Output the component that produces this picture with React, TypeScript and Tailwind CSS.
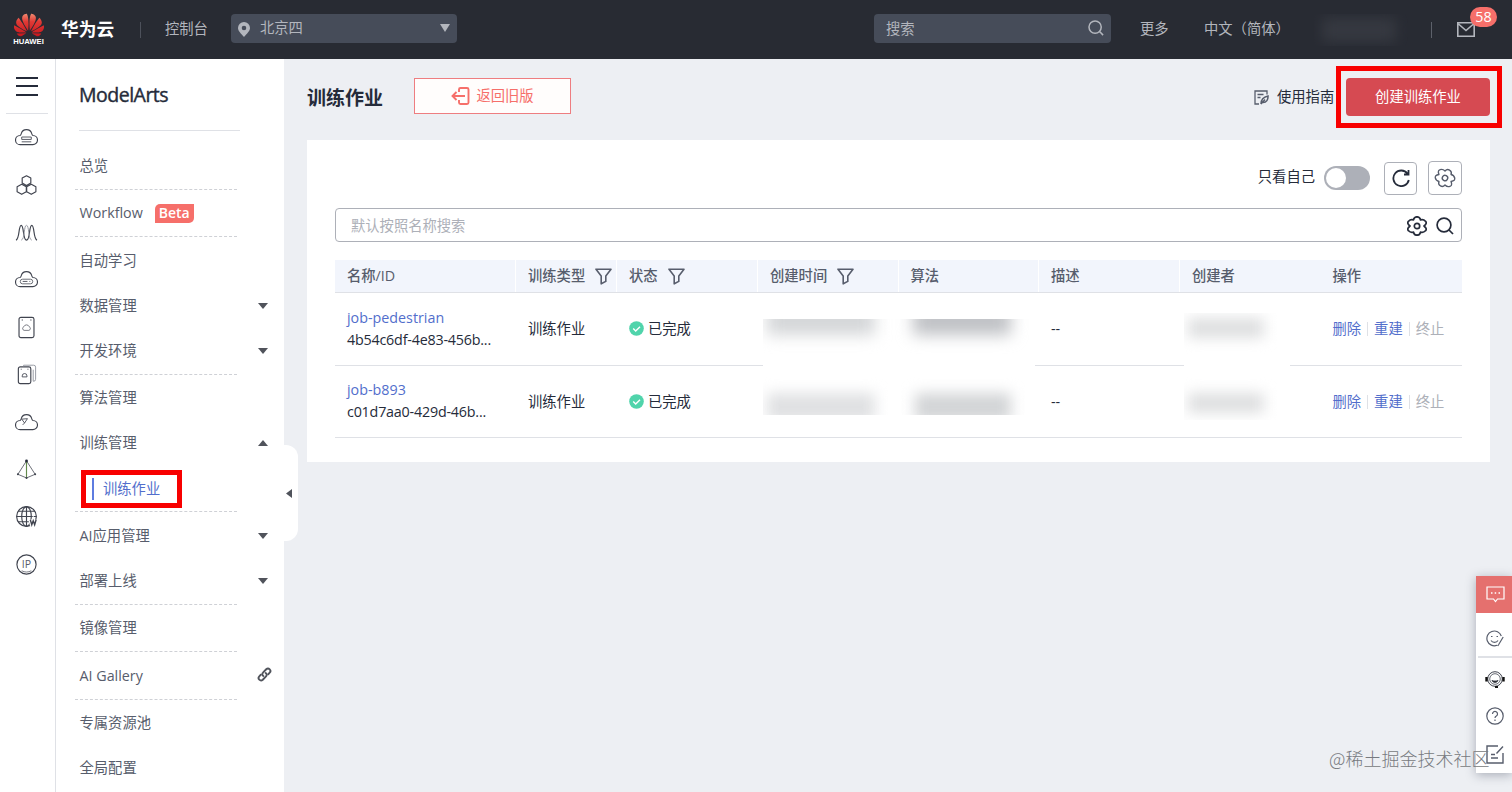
import type { ReactNode } from "react";
import { SiHuawei } from "react-icons/si";

interface IconProps {
  className?: string;
}

interface MenuItem {
  label: string;
  arrow?: "up" | "down";
  beta?: boolean;
  link?: boolean;
  active?: boolean;
}

const menu: MenuItem[][] = [
  [{ label: "总览" }],
  [{ label: "Workflow", beta: true }],
  [
    { label: "自动学习" },
    { label: "数据管理", arrow: "down" },
    { label: "开发环境", arrow: "down" },
  ],
  [
    { label: "算法管理" },
    { label: "训练管理", arrow: "up" },
    { label: "训练作业", active: true },
  ],
  [
    { label: "AI应用管理", arrow: "down" },
    { label: "部署上线", arrow: "down" },
  ],
  [{ label: "镜像管理" }],
  [{ label: "AI Gallery", link: true }],
  [{ label: "专属资源池" }, { label: "全局配置" }],
];

const columns = [
  { label: "名称/ID" },
  { label: "训练类型", filter: true },
  { label: "状态", filter: true },
  { label: "创建时间", filter: true },
  { label: "算法" },
  { label: "描述" },
  { label: "创建者" },
  { label: "操作" },
];

const jobs = [
  { name: "job-pedestrian", id: "4b54c6df-4e83-456b..." },
  { name: "job-b893", id: "c01d7aa0-429d-46b..." },
];

const tableGrid =
  "grid grid-cols-[181px_101px_141px_140.5px_140.5px_141px_140.5px_1fr]";

const Search = ({ className }: IconProps) => (
  <svg viewBox="0 0 18 18" fill="none" stroke="currentColor" className={className}>
    <circle cx="8" cy="8" r="6.9" />
    <path d="M13 13 17 17" />
  </svg>
);

const Gear = ({ className }: IconProps) => (
  <svg viewBox="0 0 20 20" fill="none" stroke="currentColor" strokeLinejoin="round" className={className}>
    <path d="M17 10Q20.500 7.200 18.400 5.200 16.600 3.100 13.500 3.940 12.900 .8 10 .8 7.100 .8 6.500 3.940 3.400 3.100 1.600 5.200-.5 7.200 3 10-.5 12.800 1.600 14.800 3.400 16.900 6.500 16.060 7.100 19.200 10 19.200 12.900 19.200 13.500 16.060 16.600 16.900 18.400 14.800 20.500 12.800 17 10Z" />
    <circle cx="10" cy="10" r="2.700" />
  </svg>
);

const Funnel = () => (
  <svg width="17" height="17" viewBox="0 0 17 17" fill="none" stroke="#575d6c" strokeWidth="1.600" strokeLinejoin="round">
    <path d="M1 1.200h15L10.800 8v5.400L6.200 15.800V8z" />
  </svg>
);

const Caret = ({ dir }: { dir: "up" | "down" }) => (
  <svg width="10" height="6" viewBox="0 0 10 6" fill="#50535b">
    <path d={dir === "up" ? "M5 0l5 6H0z" : "M0 0h10L5 6z"} />
  </svg>
);

const cloud = "M5.500 19.500a4.800 4.800 0 0 1-.3-9.600C6 9.800 6 9.500 6.500 8a5.700 5.700 0 0 1 11 0c.5 1.500.5 1.800 1.300 1.900a4.800 4.800 0 0 1-.3 9.600z";

const railIcons: ReactNode[] = [
  <>
    <path d={cloud} />
    <path d="M7 11.500h10V14H7zM7 16.500h10" strokeWidth=".9" />
  </>,
  <path d="M12 1.800l4.500 2.500v5L12 12 7.500 9.300v-5zM7 10.700l4.800 2.600v5.200L7 21.200l-4.800-2.700v-5.200zM17 10.700l4.800 2.600v5.200L17 21.200l-4.800-2.700v-5.200z" strokeLinejoin="round" />,
  <>
    <path d="M1 20c4-1 2.500-15.500 5.500-15.500S8 20 12 20s2.500-15.500 5.500-15.500S19 19 23 20" />
    <path d="M6.500 20c4-1 2.500-15.500 5.500-15.500S13.500 19 17.500 20" stroke="#8a8e99" strokeWidth=".9" />
  </>,
  <>
    <path d={cloud} />
    <rect x="5.500" y="11.700" width="13" height="4.800" rx="2.400" strokeWidth=".8" />
    <path d="M8 14h5M15 14h1" strokeWidth=".9" />
  </>,
  <>
    <rect x="4.200" y="1.500" width="15.600" height="21" rx="2" />
    <path d="M9.500 15a2 2 0 0 1-.3-3.800 3 3 0 0 1 5.600 0 2 2 0 0 1-.3 3.800z" strokeWidth=".7" />
    <path d="M7 4.200h1.200M16 4.200h1.200" />
  </>,
  <>
    <rect x="3.500" y="4" width="13" height="17.500" rx="2" />
    <path d="M9 3.500V2.300h10.500a2 2 0 0 1 2 2V17a2 2 0 0 1-2 2H19V7" stroke="#8a8e99" strokeWidth=".9" />
    <path d="M7.500 14.500v-1a2.500 2.500 0 0 1 5 0v1zM6 6.500h1M13 6.500h1" strokeWidth=".9" />
  </>,
  <>
    <path d={cloud} />
    <path d="M7 8.500l6-.5-3 4.500zM10 12.500l-2 2" strokeWidth=".9" />
  </>,
  <>
    <path d="M12 3L3 17l9 3.800L21 17z" strokeWidth=".8" />
    <path d="M12 3v17.800" stroke="#628a4b" />
    <circle cx="12" cy="3" r="1.500" fill="#252b3a" stroke="none" />
    <path d="M3 17h.1M21 17h.1M12 20.800h.1" strokeWidth="2" strokeLinecap="round" />
  </>,
  <>
    <circle cx="12" cy="12" r="10.300" />
    <ellipse cx="12" cy="12" rx="5" ry="10.300" />
    <path d="M12 1.700v20.600M1.700 12h20.600M3.500 6.500h17M3.500 17.500H15" />
    <path d="M16 15.500l1.500 5 1.500-4 1.500 4 1.500-5" stroke="#fff" strokeWidth="4" />
    <path d="M16 15.500l1.500 5 1.500-4 1.500 4 1.500-5" strokeWidth="1.500" />
  </>,
  <>
    <circle cx="12" cy="12" r="10" />
    <text x="12" y="15.300" fontSize="11" textAnchor="middle" fill="#575d6c" stroke="none">
      IP
    </text>
    <path d="M7 18.500c3 1.800 7 1.800 10 0" strokeWidth=".7" />
  </>,
];

const Header = () => (
  <header className="flex h-[59px] shrink-0 items-center bg-[#282b33] text-[#b3b6bd]">
    <svg width="0" height="0" className="absolute">
      <linearGradient id="petals" x1="0" y1="0" x2="0" y2="1">
        <stop offset="0" stopColor="#f08a70" />
        <stop offset=".35" stopColor="#e03a35" />
        <stop offset="1" stopColor="#c8161d" />
      </linearGradient>
    </svg>
    <div className="ml-[12px] flex w-[33px] flex-col items-center">
      <SiHuawei size={30} fill="url(#petals)" className="-mt-[4px] -mb-[3px]" />
      <span className="font-['Liberation_Sans'] text-[7.700px] leading-[9px] font-bold text-white">
        HUAWEI
      </span>
    </div>
    <span className="-mt-px ml-[16px] w-[55px] text-[17.700px] font-bold text-white">华为云</span>
    <div className="ml-6 h-4 w-px bg-[#4d515b]" />
    <span className="-mt-px ml-6 w-[66px]">控制台</span>
    <div className="-mt-[3px] flex h-[29px] w-[226px] items-center rounded-sm bg-[#464c59] pr-[7px] pl-[7px]">
      <svg width="12" height="15" viewBox="0 0 12 15" fill="#b3b6bd" className="mt-[2px]">
        <path fillRule="evenodd" d="M6 0a6 6 0 0 1 6 6c0 3-3 5.500-6 9-3-3.500-6-6-6-9a6 6 0 0 1 6-6zm0 3.700a2.300 2.300 0 1 0 0 4.600 2.300 2.300 0 0 0 0-4.600z" />
      </svg>
      <span className="ml-[10px] flex-1">北京四</span>
      <svg width="10" height="8" viewBox="0 0 10 8" fill="#b3b6bd">
        <path d="M0 0h10L5 8z" />
      </svg>
    </div>
    <div className="-mt-[3px] ml-auto flex h-[29px] w-[237px] items-center justify-between rounded-sm bg-[#464c59] pr-[7px] pl-[12px]">
      <span className="mt-px">搜索</span>
      <Search className="size-4 stroke-[1.700]" />
    </div>
    <span className="-mt-px ml-[29px] w-[64px]">更多</span>
    <span className="-mt-px w-[110px] whitespace-nowrap">中文（简体）</span>
    <div className="h-8 w-[94px] overflow-hidden">
      <div className="mt-1 ml-2 h-6 w-[74px] bg-[#363941] blur-[7px]" />
    </div>
    <div className="ml-[23px] h-4 w-px bg-[#5d616b]" />
    <div className="relative mr-[37px] ml-[25px]">
      <svg width="18" height="15" viewBox="0 0 18 15" fill="none" stroke="#b3b6bd" strokeWidth="1.600">
        <path d="M.8.800h16.400v13.400H.8zM1.500 2L9 8.500 16.500 2" />
      </svg>
      <span className="absolute -top-[15px] left-[13px] flex h-5 w-[27px] items-center justify-center rounded-full bg-[#f66f6a] text-[14.300px] text-white">
        58
      </span>
    </div>
  </header>
);

const Rail = () => (
  <div className="flex w-14 shrink-0 flex-col items-center border-r border-[#dfe1e6] pr-[2px]">
    <div className="flex h-[55px] w-[42px] items-center justify-center border-b border-[#dfe1e6]">
      <svg width="22" height="20" viewBox="0 0 22 20" stroke="#252b3a" strokeWidth="2">
        <path d="M0 2h22M0 10h22M0 19h22" />
      </svg>
    </div>
    {railIcons.map((icon, i) => (
      <div key={i} className="flex h-[47.400px] items-center">
        <svg width="23" height="23" viewBox="0 0 24 24" fill="none" stroke="#40444f" strokeWidth="1.200">
          {icon}
        </svg>
      </div>
    ))}
  </div>
);

const MenuRow = ({ item }: { item: MenuItem }) => {
  if (item.active) {
    return (
      <div className="flex h-[45px] items-center pl-[25px]">
        <div className="flex h-[38px] w-[101px] items-center border-[5px] border-[#f80000] pl-[6px]">
          <div className="mr-[9px] h-[22px] w-[2px] bg-[#5e7ce0]" />
          <span className="text-[#526ecc]">{item.label}</span>
        </div>
      </div>
    );
  }
  return (
    <div className="flex h-[45px] items-center pr-4 pl-[23.500px]">
      <span className="-mt-px">{item.label}</span>
      {item.beta && (
        <span className="-mt-px ml-3 flex h-[19px] w-[39px] items-center justify-center rounded-tl-[5px] rounded-br-[5px] bg-[#f66f6a] text-[14px] font-semibold text-white">
          Beta
        </span>
      )}
      {item.arrow && (
        <span className="-mt-px ml-auto">
          <Caret dir={item.arrow} />
        </span>
      )}
      {item.link && (
        <svg width="15" height="15" viewBox="0 0 15 15" fill="none" stroke="#50535b" strokeWidth="1.900" strokeLinecap="round" className="-mt-[3px] -mr-[4px] ml-auto">
          <path d="M6.300 9c-1.300-.9-1.300-2.300-.3-3.300l3.200-3.400c1.200-1.100 2.500-1 3.500 0s1 2.300 0 3.400l-1.500 1.600" />
          <path d="M8.700 6c1.300.9 1.300 2.300.3 3.300l-3.200 3.400c-1.200 1.100-2.500 1-3.500 0s-1-2.300 0-3.400l1.500-1.600" />
        </svg>
      )}
    </div>
  );
};

const Sidebar = () => (
  <aside className="relative w-[228px] shrink-0 bg-white text-[#575d6c]">
    <div className="ml-[23px] flex h-[72px] w-[161px] items-center border-b border-[#dfe1e6] text-[19.500px] tracking-[-0.5px] text-[#252b3a] [-webkit-text-stroke:0.4px]">
      ModelArts
    </div>
    <nav className="pt-[11px]">
      {menu.map((group, i) => (
        <div key={i}>
          <div className="h-[1.500px]" />
          {group.map((item) => (
            <MenuRow key={item.label} item={item} />
          ))}
          {i < menu.length - 1 && (
            <div className="ml-[19px] w-[162px] border-t border-dashed border-[#cfd1d6]" />
          )}
        </div>
      ))}
    </nav>
    <div className="absolute top-[386px] left-full flex h-24 w-[14px] items-center rounded-r-xl bg-white pl-[2px]">
      <svg width="6" height="9" viewBox="0 0 6 9" fill="#50535b">
        <path d="M6 0v9L0 4.500z" />
      </svg>
    </div>
  </aside>
);

const JobRow = ({ name, id }: { name: string; id: string }) => (
  <div className={`${tableGrid} h-[72.500px] items-center border-b border-[#dfe1e6] text-[#252b3a] [&>*]:pl-3`}>
    <div className="leading-[22px]">
      <p className="text-[#526ecc]">{name}</p>
      <p className="tracking-[-0.2px]">{id}</p>
    </div>
    <span className="pt-px">训练作业</span>
    <span className="flex items-center gap-1 pt-px">
      <svg width="15" height="15" viewBox="0 0 15 15" fill="none" className="-mt-px">
        <circle cx="7.500" cy="7.500" r="7.300" fill="#50d4ab" />
        <path d="M4.200 7.500l2.500 2.500 4.300-4.300" stroke="#fff" strokeWidth="1.400" />
      </svg>
      已完成
    </span>
    <span />
    <span />
    <span className="pt-px">--</span>
    <span />
    <div className="flex items-center pt-px text-[#526ecc]">
      <span>删除</span>
      <i className="mx-[6px] h-[14px] w-px bg-[#dfe1e6]" />
      <span>重建</span>
      <i className="mx-[6px] h-[14px] w-px bg-[#dfe1e6]" />
      <span className="text-[#adb0b8]">终止</span>
    </div>
  </div>
);

// masked cells, laid over the table rows
const Masks = () => (
  <>
    <div className="absolute top-[179px] left-[456px] h-24 w-[272px] overflow-hidden bg-white">
      <div className="absolute -top-3 left-[4px] h-7 w-[108px] bg-[#d4d6d8] blur-[8px]" />
      <div className="absolute -top-3 left-[150px] h-7 w-[98px] bg-[#bfc1c5] blur-[8px]" />
      <div className="absolute top-[74px] left-[4px] h-7 w-[108px] bg-[#e0e1e3] blur-[7px]" />
      <div className="absolute top-[74px] left-[152px] h-7 w-[96px] bg-[#d3d5d7] blur-[7px]" />
    </div>
    <div className="absolute top-[173px] left-[877px] h-[107px] w-[106px] overflow-hidden bg-white">
      <div className="absolute top-[5px] left-[4px] h-5 w-[76px] bg-[#dedfe0] blur-[7px]" />
      <div className="absolute top-[80px] left-[4px] h-5 w-[76px] bg-[#dedfe0] blur-[7px]" />
    </div>
  </>
);

const JobsCard = () => (
  <div className="relative ml-[23px] h-[322px] w-[1183px] bg-white px-7 pt-[21px]">
    <div className="flex h-[34px] items-center justify-end text-[#252b3a]">
      <span className="-mt-[2px] mr-[9px]">只看自己</span>
      <div className="mr-[14px] flex h-6 w-[46px] items-center rounded-full bg-[#adb0b8] pl-[2px]">
        <div className="size-5 rounded-full bg-white" />
      </div>
      <button className="mr-[11px] flex size-[33px] items-center justify-center rounded-sm border border-[#adb0b8]">
        <svg width="18" height="18" viewBox="0 0 18 18" fill="none" stroke="#252b3a" strokeWidth="1.800">
          <path d="M15.500 4.700A7.800 7.800 0 1 0 16.800 11M16.500 1v4.500h-4.500" />
        </svg>
      </button>
      <button className="flex size-[34px] items-center justify-center rounded-sm border border-[#adb0b8] text-[#575d6c]">
        <Gear className="size-5 rotate-30 stroke-[1.400]" />
      </button>
    </div>
    <div className="mt-[13px] flex h-[34px] items-center rounded-sm border border-[#adb0b8] pt-px pr-[7px] pl-[15px] text-[#252b3a]">
      <span className="flex-1 text-[#adb0b8]">默认按照名称搜索</span>
      <Gear className="size-5 stroke-[1.700]" />
      <Search className="ml-[9px] size-[18px] stroke-[1.700]" />
    </div>
    <div className={`${tableGrid} mt-[18px] h-[33px] border-b border-[#dfe1e6] bg-[#f2f5fc] font-medium text-[#575d6c]`}>
      {columns.map(({ label, filter }, i) => (
        <div
          key={label}
          className={`flex items-center gap-[10px] pl-3 ${i < 6 ? "border-r border-white" : ""}`}
        >
          <span className="shrink-0">{label}</span>
          {filter && <Funnel />}
        </div>
      ))}
    </div>
    {jobs.map((job) => (
      <JobRow key={job.id} {...job} />
    ))}
    <Masks />
  </div>
);

const PageTitle = () => (
  <div className="flex h-[81px] items-start pl-[23px] text-[#252b3a]">
    <h1 className="mt-[25px] w-[107px] text-[19px] leading-[28px] font-bold">训练作业</h1>
    <button className="mt-[19px] flex h-[36px] w-[157px] items-center justify-center gap-[6px] border border-[#ee7d80] bg-[#fffdfc] text-[#f66f6a]">
      <svg width="19" height="18" viewBox="0 0 19 18" fill="none" stroke="currentColor" strokeWidth="1.900">
        <path d="M8 5V2.500a1.500 1.500 0 0 1 1.500-1.500h6.500a1.500 1.500 0 0 1 1.500 1.500v13a1.500 1.500 0 0 1-1.500 1.500H9.500A1.500 1.500 0 0 1 8 15.500V13M14 9H1.500M5.500 5L1.500 9l4 4" />
      </svg>
      返回旧版
    </button>
    <div className="mt-[28px] ml-auto flex items-center">
      <svg width="15" height="15" viewBox="0 0 15 15" fill="none" stroke="#575d6c" strokeWidth="1.300" className="mt-px">
        <path d="M13 4.500V1H1v13h4M3.500 4.500h6M3.500 7.500h3" />
        <path d="M7 14c0-4 2.500-7 7-8 .3 3.500-1.500 6.500-5 6.500M7 14l4-4.500" strokeWidth="1.500" />
      </svg>
      <span className="ml-[8px] w-[59px]">使用指南</span>
    </div>
    <div className="mt-[7px] mr-[10px] h-[62px] w-[166px] border-[5px] border-[#f80000] pt-[7px] pl-[5px]">
      <button className="h-[38px] w-[144px] rounded-sm bg-[#d64a52] text-white">创建训练作业</button>
    </div>
  </div>
);

const FloatBar = () => (
  <div className="absolute top-[576px] right-0 flex h-[197px] w-9 flex-col items-center bg-white pl-[2px] text-[#575d6c] shadow-[0_2px_10px_rgba(40,50,70,0.35)]">
    <div className="-ml-[2px] flex h-[37px] w-9 items-center justify-center bg-[#e5706e] pl-[2px]">
      <svg width="19" height="17" viewBox="0 0 19 17" fill="none" stroke="#fff" strokeWidth="1.200">
        <path d="M1 1h17v12h-6.500l-2 2.500-2-2.500H1z" />
        <path d="M5 7h1.500M8.700 7h1.500M12.500 7H14" strokeWidth="1.600" />
      </svg>
    </div>
    <div className="flex h-[45px] w-full items-center justify-center border-b-2 border-[#dfe1e6] pt-2">
      <svg width="18" height="17" viewBox="0 0 18 17" fill="none" stroke="currentColor" strokeWidth="1.200">
        <path d="M11 15.300A7.400 7.400 0 1 1 15.300 6M17.200 7l-4.500 7.500-1 1.500" />
        <path d="M5 10.500c1.500 2.500 5.500 2.500 7 0M5 6.500h1.500M10.500 6.500H12" />
      </svg>
    </div>
    <svg width="20" height="17" viewBox="0 0 20 17" fill="none" stroke="#40444f" strokeWidth="1" className="mt-[13px]">
      <circle cx="10" cy="8" r="7.300" />
      <circle cx="10" cy="8" r="5.300" strokeWidth=".8" />
      <path d="M7 9.500c1 2.500 5 2.500 6 0-2 .8-4 .8-6 0z" fill="#111" />
      <path d="M1.500 6v4.500M18.500 6v4.500" stroke="#111" strokeWidth="2.400" />
      <path d="M10 16h3" stroke="#111" strokeWidth="2" />
    </svg>
    <svg width="18" height="18" viewBox="0 0 18 18" fill="none" stroke="currentColor" strokeWidth="1.200" className="mt-[19px]">
      <circle cx="9" cy="9" r="8.200" />
      <path d="M6.500 7a2.500 2.500 0 1 1 3.800 2.100c-.9.500-1.300.9-1.300 2M9 12.500V14" />
    </svg>
    <svg width="18" height="19" viewBox="0 0 18 19" fill="none" stroke="currentColor" strokeWidth="1.400" className="mt-[20px]">
      <path d="M12 1H1v17h16V8M17 1.500l-6.500 7M5 9.500h4M5 13h7" />
    </svg>
  </div>
);

export default function App() {
  return (
    <div className="relative flex h-[792px] w-[1512px] flex-col overflow-hidden bg-white font-['Open_Sans','Noto_Sans_CJK_SC',sans-serif] text-[14.300px] leading-5">
      <Header />
      <div className="flex min-h-0 flex-1">
        <Rail />
        <Sidebar />
        <main className="flex-1 bg-[#edeff3]">
          <PageTitle />
          <JobsCard />
        </main>
      </div>
      <FloatBar />
      <span className="absolute top-[746px] left-[1329px] font-['Noto_Sans_CJK_SC',sans-serif] text-[18px] leading-6 font-light whitespace-nowrap text-[#777a80]">
        @稀土掘金技术社区
      </span>
    </div>
  );
}
